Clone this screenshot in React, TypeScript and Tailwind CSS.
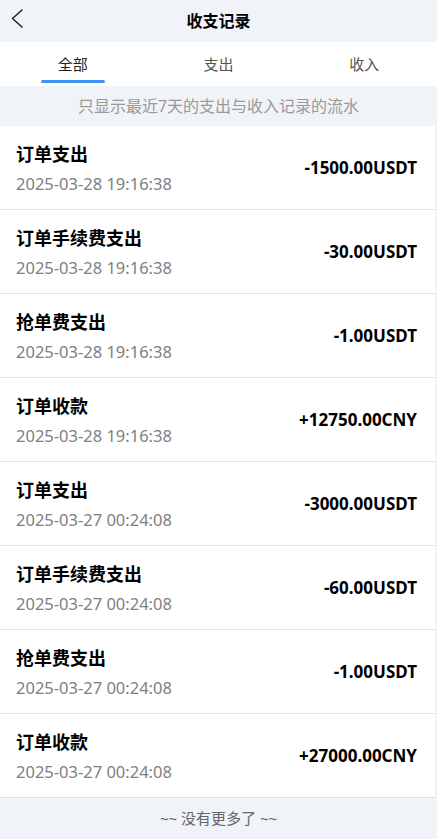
const records = [
  { title: "订单支出", time: "2025-03-28 19:16:38", amount: "-1500.00USDT" },
  { title: "订单手续费支出", time: "2025-03-28 19:16:38", amount: "-30.00USDT" },
  { title: "抢单费支出", time: "2025-03-28 19:16:38", amount: "-1.00USDT" },
  { title: "订单收款", time: "2025-03-28 19:16:38", amount: "+12750.00CNY" },
  { title: "订单支出", time: "2025-03-27 00:24:08", amount: "-3000.00USDT" },
  { title: "订单手续费支出", time: "2025-03-27 00:24:08", amount: "-60.00USDT" },
  { title: "抢单费支出", time: "2025-03-27 00:24:08", amount: "-1.00USDT" },
  { title: "订单收款", time: "2025-03-27 00:24:08", amount: "+27000.00CNY" },
]

const tabs = ["全部", "支出", "收入"]

export default function App() {
  return (
    <div
      className="min-h-[839px] w-full bg-[#f0f3f7] text-black"
      style={{ fontFamily: '"Noto Sans", "Noto Sans CJK SC", sans-serif' }}
    >
      {/* Header */}
      <header className="relative flex h-[42px] items-center justify-center bg-[#f0f3f7]">
        <button className="absolute left-[11px] top-[9px] text-[#222]">
          <svg width="12" height="19" viewBox="0 0 12 19" fill="none">
            <path d="M11 1 L1.5 9.5 L11 18" stroke="currentColor" strokeWidth="1.5" strokeLinecap="round" strokeLinejoin="round" />
          </svg>
        </button>
        <h1 className="text-[16px] font-bold leading-none">收支记录</h1>
      </header>

      {/* Tabs */}
      <nav className="grid h-[44px] grid-cols-3 bg-white">
        {tabs.map((t, i) => (
          <div key={t} className="relative flex items-center justify-center">
            <span className={`text-[15px] ${i === 0 ? "text-[#222]" : "text-[#555]"}`}>{t}</span>
            {i === 0 && (
              <span className="absolute bottom-[3px] left-1/2 h-[3px] w-[64px] -translate-x-1/2 rounded-full bg-[#3d94f6]" />
            )}
          </div>
        ))}
      </nav>

      {/* Notice */}
      <div className="flex h-[40px] items-center justify-center text-[16px] text-[#999]">
        只显示最近7天的支出与收入记录的流水
      </div>

      {/* List */}
      <ul className="pr-[2px]">
        {records.map((r, i) => (
          <li
            key={i}
            className="flex h-[84px] items-center justify-between border-b border-[#e2e2e2] bg-white pl-[16px] pr-[18px]"
          >
            <div className="flex flex-col">
              <span className="text-[18px] font-bold leading-[24px]">{r.title}</span>
              <span className="mt-[8px] text-[16.5px] leading-[20px] text-[#808080]">{r.time}</span>
            </div>
            <span className="text-[17px] font-bold">{r.amount}</span>
          </li>
        ))}
      </ul>

      {/* Footer */}
      <div className="flex h-[40px] items-center justify-center text-[15px] text-[#666]">
        ~~ 没有更多了 ~~
      </div>
    </div>
  )
}
